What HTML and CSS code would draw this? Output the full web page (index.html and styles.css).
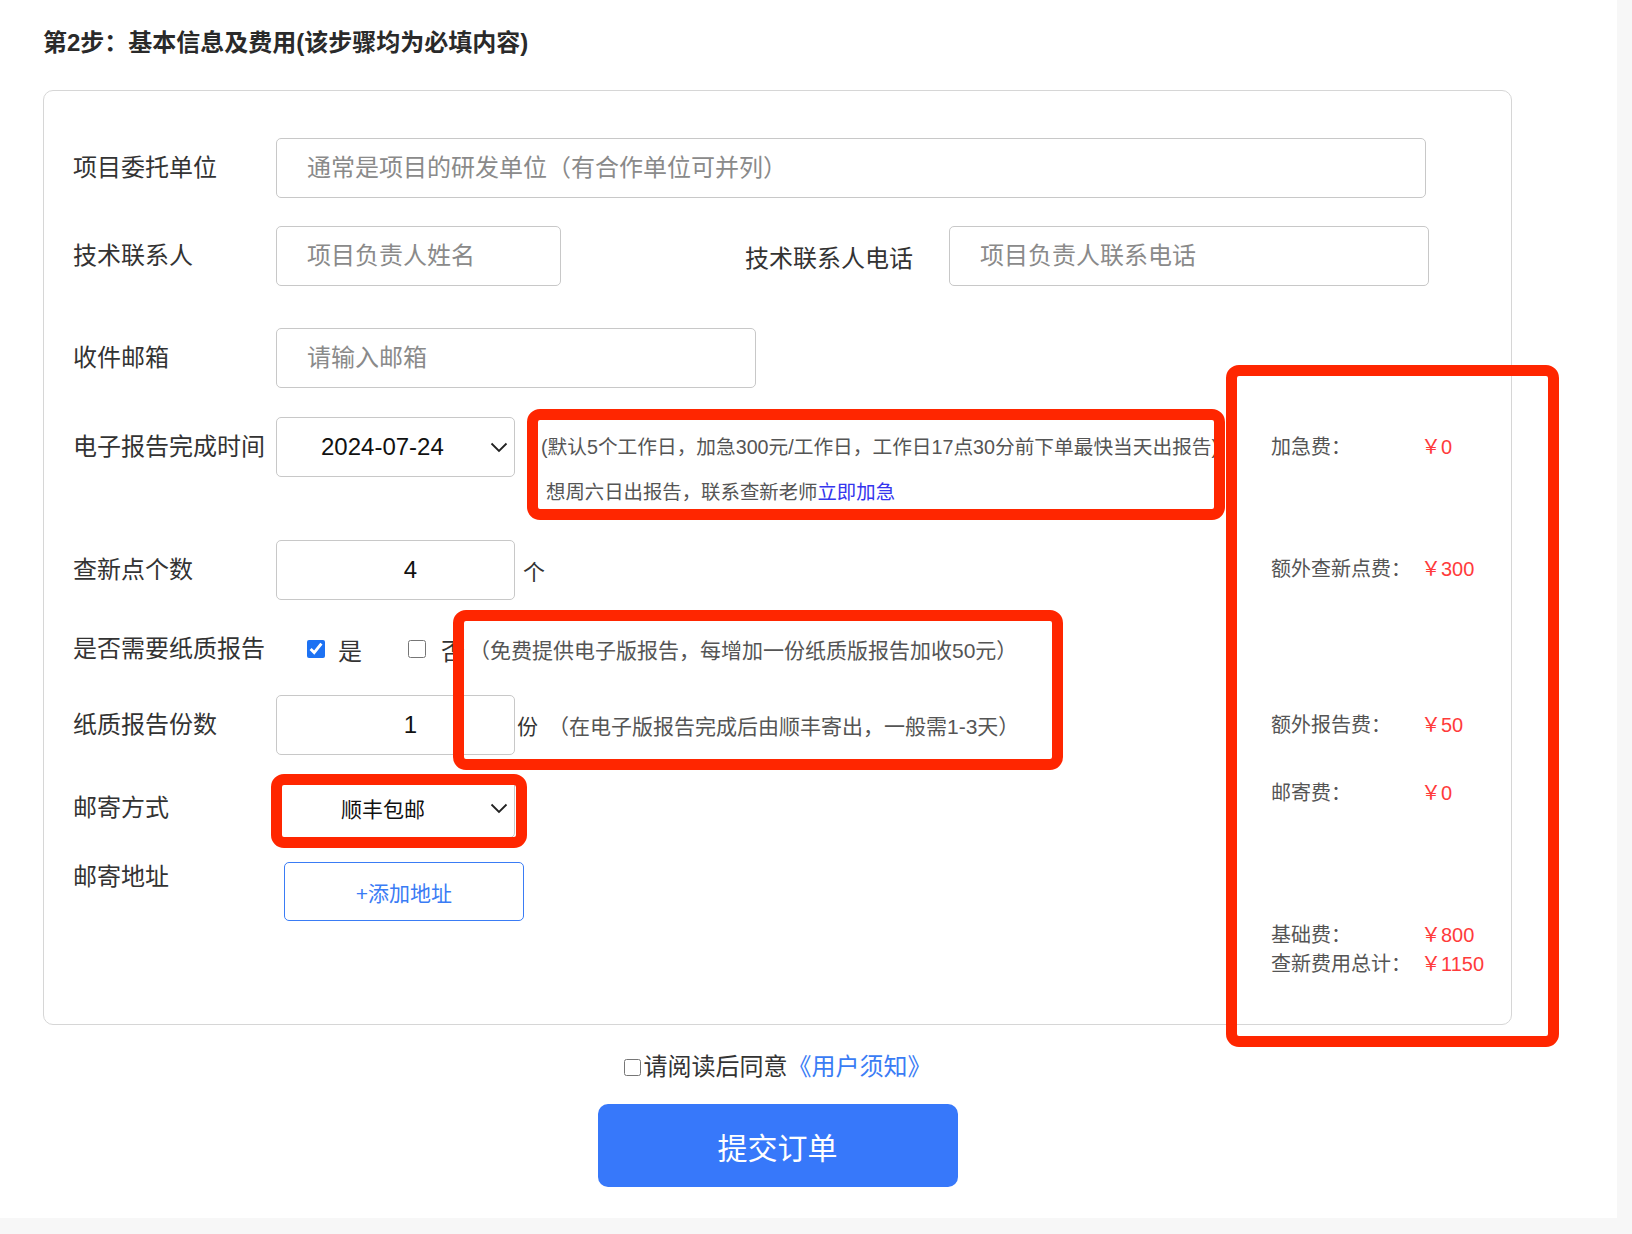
FILE: index.html
```html
<!DOCTYPE html>
<html lang="zh-CN">
<head>
<meta charset="utf-8">
<title>第2步：基本信息及费用</title>
<link rel="stylesheet" href="styles.css">
</head>
<body>
<div class="page">
  <h2 class="title">第2步：基本信息及费用(该步骤均为必填内容)</h2>

  <div class="card">
    <div class="row r1">
      <label class="lbl">项目委托单位</label>
      <input class="ipt w-full" placeholder="通常是项目的研发单位（有合作单位可并列）">
    </div>
    <div class="row r2">
      <label class="lbl">技术联系人</label>
      <input class="ipt w-name" placeholder="项目负责人姓名">
      <label class="lbl2">技术联系人电话</label>
      <input class="ipt w-phone" placeholder="项目负责人联系电话">
    </div>
    <div class="row r3">
      <label class="lbl">收件邮箱</label>
      <input class="ipt w-mail" placeholder="请输入邮箱">
    </div>

    <div class="lower">
      <div class="form-col">
        <div class="row r4">
          <label class="lbl">电子报告完成时间</label>
          <div class="sel sel-date">
            <span>2024-07-24</span>
            <svg class="chev" width="18" height="11" viewBox="0 0 18 11"><polyline points="1.5,1.5 9,9 16.5,1.5" fill="none" stroke="#222" stroke-width="1.8"/></svg>
          </div>
          <div class="hint-urgent">
            <p class="hu-line1">(默认5个工作日，加急300元/工作日，工作日17点30分前下单最快当天出报告)</p>
            <p class="hu-line2">想周六日出报告，联系查新老师<a href="#">立即加急</a></p>
          </div>
        </div>
        <div class="row r5">
          <label class="lbl">查新点个数</label>
          <input class="ipt num" value="4">
          <span class="unit">个</span>
        </div>
        <div class="row r6">
          <label class="lbl">是否需要纸质报告</label>
          <input type="checkbox" class="chk" checked>
          <span class="opt">是</span>
          <input type="checkbox" class="chk chk2">
          <span class="opt opt2">否</span>
          <span class="hint">（免费提供电子版报告，每增加一份纸质版报告加收50元）</span>
        </div>
        <div class="row r7">
          <label class="lbl">纸质报告份数</label>
          <input class="ipt num" value="1">
          <span class="unit2">份</span>
          <span class="hint hint2">（在电子版报告完成后由顺丰寄出，一般需1-3天）</span>
        </div>
        <div class="row r8">
          <label class="lbl">邮寄方式</label>
          <div class="sel sel-post">
            <span>顺丰包邮</span>
            <svg class="chev" width="18" height="11" viewBox="0 0 18 11"><polyline points="1.5,1.5 9,9 16.5,1.5" fill="none" stroke="#222" stroke-width="1.8"/></svg>
          </div>
        </div>
        <div class="row r9">
          <label class="lbl">邮寄地址</label>
          <button class="addbtn">+添加地址</button>
        </div>
      </div>

      <div class="fee-col">
        <div class="fee f1"><span class="k">加急费：</span><span class="v">￥0</span></div>
        <div class="fee f2"><span class="k">额外查新点费：</span><span class="v">￥300</span></div>
        <div class="fee f3"><span class="k">额外报告费：</span><span class="v">￥50</span></div>
        <div class="fee f4"><span class="k">邮寄费：</span><span class="v">￥0</span></div>
        <div class="fee f5"><span class="k">基础费：</span><span class="v">￥800</span></div>
        <div class="fee f6"><span class="k">查新费用总计：</span><span class="v">￥1150</span></div>
      </div>
    </div>
  </div>

  <div class="bottom">
    <label class="agree"><input type="checkbox" class="agree-chk">请阅读后同意<a href="#">《用户须知》</a></label>
    <button class="submit">提交订单</button>
  </div>

  <div class="mark mark-urgent"></div>
  <div class="mark mark-paper"></div>
  <div class="mark mark-post"></div>
  <div class="mark mark-fee"></div>
</div>
</body>
</html>
```

FILE: styles.css
```css
html, body {
  margin: 0;
  padding: 0;
}

body {
  background: #f7f7f7;
  font-family: "Liberation Sans", "Noto Sans CJK SC", sans-serif;
  color: #333;
}

.page {
  position: relative;
  width: 1617px;
  height: 1218px;
  background: #fff;
  padding-left: 43px;
  box-sizing: border-box;
  overflow: hidden;
}

.title {
  margin: 0;
  padding: 28px 0 0 0;
  font-size: 24px;
  line-height: 30px;
  font-weight: 700;
  color: #2a2a2a;
}

.card {
  margin-top: 32px;
  width: 1469px;
  height: 935px;
  box-sizing: border-box;
  border: 1px solid #d6d6d6;
  border-radius: 10px;
  padding: 47px 0 0 29px;
}

.row {
  display: flex;
  align-items: center;
}

.lbl {
  flex: none;
  width: 203px;
  font-size: 24px;
  line-height: 60px;
  color: #333;
}

.ipt {
  flex: none;
  height: 60px;
  box-sizing: border-box;
  border: 1px solid #c8c8c8;
  border-radius: 5px;
  padding: 0 30px;
  margin: 0;
  font-family: "Liberation Sans", "Noto Sans CJK SC", sans-serif;
  font-size: 24px;
  color: #111;
  background: #fff;
  outline: none;
}

.ipt::placeholder {
  color: #8a8a8a;
}

.w-full { width: 1150px; }

.r2 { margin-top: 28px; }
.w-name { width: 285px; }
.lbl2 {
  flex: none;
  margin-left: 184px;
  width: 204px;
  font-size: 24px;
  color: #333;
}
.w-phone { width: 480px; }

.r3 { margin-top: 42px; }
.w-mail { width: 480px; }

.lower {
  display: flex;
  margin-top: 29px;
}

.form-col {
  flex: none;
  width: 1198px;
}

.fee-col {
  flex: 1;
}

/* select look-alike */
.sel {
  flex: none;
  width: 239px;
  height: 60px;
  box-sizing: border-box;
  border: 1px solid #c8c8c8;
  border-radius: 5px;
  display: flex;
  align-items: center;
  font-size: 24px;
  color: #111;
  background: #fff;
}
.sel .chev {
  margin-left: auto;
  margin-right: 6px;
}
.sel-date { padding-left: 44px; }
.sel-post {
  padding-left: 64px;
  font-size: 21px;
}

.r4 { align-items: flex-start; }

.hint-urgent {
  margin-left: 26px;
  padding-top: 7.5px;
  line-height: 45px;
  color: #555;
  white-space: nowrap;
}
.hint-urgent p {
  margin: 0;
}
.hu-line1 {
  font-size: 19.7px;
}
.hu-line2 {
  font-size: 19.4px;
  padding-left: 5px;
}
.hint-urgent a {
  color: #3535ee;
  text-decoration: none;
}

.r5 { margin-top: 25.5px; }

.num {
  width: 239px;
  text-align: center;
  padding: 0 0 0 30px;
}

.unit {
  margin-left: 8px;
  font-size: 22px;
  color: #333;
}

.r6 {
  margin-top: 19px;
  height: 60px;
}

.chk {
  flex: none;
  width: 18px;
  height: 18px;
  margin: 0 0 0 31px;
  accent-color: #1d72f3;
}
.chk2 { margin-left: 46px; }

.opt {
  margin-left: 13px;
  font-size: 24px;
  color: #333;
}
.opt2 { margin-left: 15px; }

.hint {
  margin-left: 4px;
  font-size: 21px;
  color: #555;
  white-space: nowrap;
}

.r7 { margin-top: 16px; }
.unit2 {
  margin-left: 2px;
  font-size: 21px;
  color: #333;
}
.hint2 { margin-left: 10px; }

.r8 { margin-top: 23px; }

.r9 {
  margin-top: 24px;
  align-items: flex-start;
}
.r9 .lbl { line-height: 30px; }

.addbtn {
  flex: none;
  margin: 0 0 0 8px;
  width: 240px;
  height: 59px;
  box-sizing: border-box;
  border: 1px solid #3a7cf5;
  border-radius: 5px;
  background: #fff;
  color: #3a7cf5;
  font-family: "Liberation Sans", "Noto Sans CJK SC", sans-serif;
  font-size: 21px;
  padding: 0;
}

/* fees */
.fee {
  display: flex;
  font-size: 20px;
  line-height: 29px;
  white-space: nowrap;
}
.fee .k {
  width: 150px;
  flex: none;
  color: #555;
}
.fee .v {
  color: #ff3b3b;
}
.f1 { margin-top: 16px; }
.f2 { margin-top: 93px; }
.f3 { margin-top: 127px; }
.f4 { margin-top: 39px; }
.f5 { margin-top: 113px; }
.f6 { margin-top: 0; }

/* bottom */
.bottom {
  width: 1469px;
  display: flex;
  flex-direction: column;
  align-items: center;
}

.agree {
  margin-top: 27px;
  display: flex;
  align-items: center;
  font-size: 24px;
  line-height: 30px;
  color: #333;
}
.agree a {
  color: #3a7cf5;
  text-decoration: none;
}
.agree-chk {
  width: 17px;
  height: 17px;
  margin: 0 3px 0 0;
}

.submit {
  margin-top: 22px;
  width: 360px;
  height: 83px;
  border: none;
  border-radius: 10px;
  background: #3778fa;
  color: #fff;
  font-family: "Liberation Sans", "Noto Sans CJK SC", sans-serif;
  font-size: 30px;
  padding: 0;
}

/* red annotation boxes drawn over the screenshot */
.mark {
  position: absolute;
  box-sizing: border-box;
  border: 11px solid #ff2600;
  border-radius: 13px;
  pointer-events: none;
}
.mark-urgent { left: 527px; top: 409px; width: 698px; height: 111px; }
.mark-paper  { left: 453px; top: 610px; width: 610px; height: 160px; }
.mark-post   { left: 271px; top: 774px; width: 256px; height: 74px; }
.mark-fee    { left: 1226px; top: 365px; width: 333px; height: 682px; }
```
